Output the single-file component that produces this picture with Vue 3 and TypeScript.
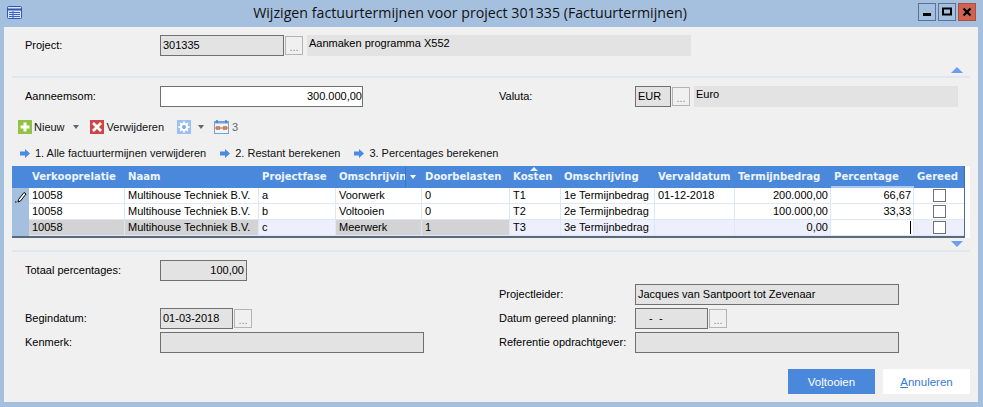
<script setup lang="ts">
interface Row {
  relatie: string
  naam: string
  fase: string
  omschrijving: string
  doorbelasten: string
  kosten: string
  termijn: string
  datum: string
  bedrag: string
  percentage: string
}

const rows: Row[] = [
  { relatie: '10058', naam: 'Multihouse Techniek B.V.', fase: 'a', omschrijving: 'Voorwerk', doorbelasten: '0', kosten: 'T1', termijn: '1e Termijnbedrag', datum: '01-12-2018', bedrag: '200.000,00', percentage: '66,67' },
  { relatie: '10058', naam: 'Multihouse Techniek B.V.', fase: 'b', omschrijving: 'Voltooien', doorbelasten: '0', kosten: 'T2', termijn: '2e Termijnbedrag', datum: '', bedrag: '100.000,00', percentage: '33,33' },
  { relatie: '10058', naam: 'Multihouse Techniek B.V.', fase: 'c', omschrijving: 'Meerwerk', doorbelasten: '1', kosten: 'T3', termijn: '3e Termijnbedrag', datum: '', bedrag: '0,00', percentage: '' }
]

const steps = ['1. Alle factuurtermijnen verwijderen', '2. Restant berekenen', '3. Percentages berekenen']
</script>

<template>
  <div class="window">
    <header class="titlebar">
      <svg class="app-icon" width="15" height="13" viewBox="0 0 15 13">
        <rect x="0.5" y="0.5" width="14" height="12" rx="1" fill="#dbe6f8" stroke="#2f55b5" />
        <path d="M0 3.5H15" stroke="#2f55b5" stroke-width="2" />
        <path d="M2 6.5H13M2 8.5H13M2 10.5H13M6 5V12" stroke="#3a62c4" />
      </svg>
      <div class="title">Wijzigen factuurtermijnen voor project 301335 (Factuurtermijnen)</div>
      <div class="win-buttons">
        <button class="win-btn"><svg width="10" height="10" viewBox="0 0 10 10"><rect x="1" y="6" width="8" height="3" fill="#000" /></svg></button>
        <button class="win-btn"><svg width="10" height="10" viewBox="0 0 10 10"><rect x="1" y="1.5" width="8" height="6" fill="none" stroke="#000" stroke-width="2" /></svg></button>
        <button class="win-btn close"><svg width="10" height="10" viewBox="0 0 10 10"><path d="M1.5 1.5L8.5 8.5M8.5 1.5L1.5 8.5" stroke="#000" stroke-width="2.4" /></svg></button>
      </div>
    </header>

    <main class="panel">
      <section class="top-row">
        <label class="lbl">Project:</label>
        <div class="field ro code">301335</div>
        <button class="dots">...</button>
        <div class="desc project-desc">Aanmaken programma X552</div>
      </section>

      <div class="collapse up"><span class="tri-up"></span></div>
      <div class="divider"></div>

      <section class="two-col amount">
        <div class="cell">
          <label class="lbl">Aanneemsom:</label>
          <div class="field right amount-field">300.000,00</div>
        </div>
        <div class="cell">
          <label class="lbl lbl-r">Valuta:</label>
          <div class="field ro valuta">EUR</div>
          <button class="dots">...</button>
          <div class="desc valuta-desc">Euro</div>
        </div>
      </section>

      <nav class="toolbar">
        <span class="tool">
          <svg width="14" height="14" viewBox="0 0 14 14"><rect width="14" height="14" fill="#8fc245" /><path d="M7 2.5V11.5M2.5 7H11.5" stroke="#fff" stroke-width="3" /></svg>
          Nieuw
        </span>
        <span class="caret nieuw-caret"></span>
        <span class="tool delete">
          <svg width="14" height="14" viewBox="0 0 14 14"><rect width="14" height="14" fill="#cf4446" /><path d="M3 3L11 11M11 3L3 11" stroke="#fff" stroke-width="2.8" /></svg>
          Verwijderen
        </span>
        <span class="tool gear">
          <svg width="14" height="14" viewBox="0 0 14 14">
            <rect width="14" height="14" fill="#9dc0f0" />
            <circle cx="7" cy="7" r="3" fill="#7fa8ea" stroke="#fff" stroke-width="2" />
            <path d="M7 1.5V3.5M7 10.5V12.5M1.5 7H3.5M10.5 7H12.5M3.2 3.2L4.6 4.6M9.4 9.4L10.8 10.8M10.8 3.2L9.4 4.6M4.6 9.4L3.2 10.8" stroke="#fff" stroke-width="1.8" />
          </svg>
        </span>
        <span class="caret gear-caret"></span>
        <span class="tool count">
          <svg width="15" height="14" viewBox="0 0 15 14">
            <rect x="0.5" y="1.5" width="14" height="12" fill="#eef4fb" stroke="#6fa3dc" />
            <path d="M0 2.5H15" stroke="#6fa3dc" stroke-width="2" />
            <path d="M3 0V3M12 0V3" stroke="#3f7fc6" stroke-width="1.5" />
            <path d="M1 8H14" stroke="#8a6a50" />
            <path d="M3 6V10M5 6V10M10 6V10M12 6V10" stroke="#d9743c" stroke-width="1.6" />
          </svg>
          3
        </span>
      </nav>

      <div class="steps">
        <span v-for="step in steps" :key="step" class="step">
          <svg width="10" height="9" viewBox="0 0 10 9"><path d="M0 2.5H5V0L10 4.5L5 9V6.5H0Z" fill="#4a8ae0" /></svg>
          {{ step }}
        </span>
      </div>

      <section class="grid-wrap">
        <div class="grid">
          <div class="grid-row head">
            <div class="marker"></div>
            <div class="c">Verkooprelatie</div>
            <div class="c">Naam</div>
            <div class="c">Projectfase</div>
            <div class="c filter">Omschrijvin<span class="filter-arrow"></span></div>
            <div class="c">Doorbelasten</div>
            <div class="c sorted">Kosten</div>
            <div class="c">Omschrijving</div>
            <div class="c">Vervaldatum</div>
            <div class="c">Termijnbedrag</div>
            <div class="c hover">Percentage</div>
            <div class="c">Gereed</div>
          </div>
          <div v-for="(row, i) in rows" :key="row.kosten" class="grid-row body" :class="{ last: i === 2 }">
            <div class="marker">
              <svg v-if="i === 0" width="12" height="13" viewBox="0 0 12 13">
                <path d="M3.5 9.5L9 2.5L11 4L5.5 11L3 12Z" fill="#fff" stroke="#000" stroke-width="1" />
                <path d="M0 12H1.5" stroke="#000" />
              </svg>
            </div>
            <div class="c sel">{{ row.relatie }}</div>
            <div class="c sel">{{ row.naam }}</div>
            <div class="c">{{ row.fase }}</div>
            <div class="c sel">{{ row.omschrijving }}</div>
            <div class="c sel">{{ row.doorbelasten }}</div>
            <div class="c">{{ row.kosten }}</div>
            <div class="c">{{ row.termijn }}</div>
            <div class="c">{{ row.datum }}</div>
            <div class="c num">{{ row.bedrag }}</div>
            <div class="c num pct">{{ row.percentage }}<span v-if="i === 2" class="cursor"></span></div>
            <div class="c check"><span class="box"></span></div>
          </div>
        </div>
      </section>

      <div class="collapse down"><span class="tri-down"></span></div>
      <div class="divider"></div>

      <section class="two-col details">
        <div class="cell">
          <label class="lbl">Totaal percentages:</label>
          <div class="field ro right totaal">100,00</div>
        </div>
        <div class="cell"></div>
        <div class="cell"></div>
        <div class="cell">
          <label class="lbl lbl-r">Projectleider:</label>
          <div class="field ro wide">Jacques van Santpoort tot Zevenaar</div>
        </div>
        <div class="cell">
          <label class="lbl">Begindatum:</label>
          <div class="field ro date">01-03-2018</div>
          <button class="dots">...</button>
        </div>
        <div class="cell">
          <label class="lbl lbl-r">Datum gereed planning:</label>
          <div class="field ro date empty-date">&nbsp;&nbsp;-&nbsp;&nbsp;-</div>
          <button class="dots">...</button>
        </div>
        <div class="cell">
          <label class="lbl">Kenmerk:</label>
          <div class="field ro wide"></div>
        </div>
        <div class="cell">
          <label class="lbl lbl-r">Referentie opdrachtgever:</label>
          <div class="field ro wide"></div>
        </div>
      </section>

      <footer class="actions">
        <button class="btn primary"><span>Vo<u>l</u>tooien</span></button>
        <button class="btn"><span><u>A</u>nnuleren</span></button>
      </footer>
    </main>
  </div>
</template>

<style>
html,
body {
  margin: 0;
  background: #a5c0de;
}
</style>

<style scoped>
.window {
  width: 983px;
  height: 407px;
  display: flex;
  flex-direction: column;
  background: #a5c0de;
  font-family: "Liberation Sans", Arial, sans-serif;
  font-size: 11px;
  color: #000;
  overflow: hidden;
}

.titlebar {
  height: 27px;
  flex: none;
  display: flex;
  align-items: center;
}

.app-icon {
  margin-left: 7px;
  margin-top: -2px;
  width: 15px;
  flex: none;
}

.title {
  flex: 1;
  text-align: center;
  font-family: "Open Sans", sans-serif;
  font-size: 14.2px;
  color: #111;
  margin-top: -2px;
}

.win-buttons {
  display: flex;
  gap: 2px;
  margin-right: 7px;
  margin-top: -3px;
}

.win-btn {
  width: 18px;
  height: 18px;
  padding: 0;
  display: flex;
  align-items: center;
  justify-content: center;
  background: #a5c0de;
  border: 1px solid #5b7590;
}

.win-btn.close {
  background: #d2624e;
  border-color: #a84f40;
}

.panel {
  flex: none;
  height: 375px;
  margin-left: 4px;
  width: 974px;
  background: #f0f0f0;
  display: flex;
  flex-direction: column;
}

.panel > * {
  flex: none;
}

.top-row {
  display: flex;
  height: 21px;
  margin-top: 8px;
  padding-left: 21px;
}

.lbl {
  width: 135px;
  flex: none;
  line-height: 20px;
  white-space: nowrap;
}

.lbl-r {
  width: 136px;
}

.field {
  box-sizing: border-box;
  height: 21px;
  border: 1px solid #707070;
  background: #fff;
  line-height: 18px;
  padding: 0 2px;
  white-space: nowrap;
  flex: none;
}

.ro {
  background: #e3e3e3;
}

.right {
  text-align: right;
}

.code {
  width: 124px;
}

.dots {
  box-sizing: border-box;
  width: 18px;
  height: 19px;
  margin: 1px 0 0 1px;
  padding: 0;
  border: 1px solid #b4b4b4;
  background: #f0f0f0;
  color: #8a8a8a;
  font: 11px "Liberation Sans", sans-serif;
  line-height: 20px;
  flex: none;
}

.desc {
  box-sizing: border-box;
  height: 21px;
  margin-left: 4px;
  background: #e3e3e3;
  padding: 0 2px;
  line-height: 17px;
  flex: none;
}

.project-desc {
  width: 384px;
}

.valuta-desc {
  width: 264px;
}

.collapse {
  display: flex;
  justify-content: flex-end;
  padding-right: 15px;
  box-sizing: border-box;
  height: 9px;
}

.collapse.up {
  margin-top: 11px;
}

.collapse.down {
  margin-top: 3px;
}

.tri-up,
.tri-down {
  width: 0;
  height: 0;
  border-left: 6px solid transparent;
  border-right: 6px solid transparent;
}

.tri-up {
  border-bottom: 6px solid #6c9df0;
}

.tri-down {
  border-top: 6px solid #6c9df0;
}

.divider {
  height: 2px;
  margin-left: 8px;
  width: 958px;
  background: #dfe7f1;
}

.two-col {
  display: grid;
  grid-template-columns: 474px 1fr;
  padding-left: 21px;
}

.amount {
  margin-top: 8px;
}

.amount .amount-field {
  padding-right: 0;
}

.cell {
  display: flex;
  height: 21px;
}

.amount-field {
  width: 203px;
}

.valuta {
  width: 36px;
}

.toolbar {
  display: flex;
  align-items: center;
  height: 14px;
  margin-top: 13px;
  padding-left: 14px;
}

.tool {
  display: flex;
  align-items: center;
  gap: 2px;
  color: #111;
}

.caret {
  width: 0;
  height: 0;
  border-left: 3.5px solid transparent;
  border-right: 3.5px solid transparent;
  border-top: 4px solid #666;
}

.nieuw-caret {
  margin-left: 8px;
}

.delete {
  margin-left: 11px;
  gap: 3px;
}

.gear {
  margin-left: 13px;
}

.gear-caret {
  margin-left: 7px;
}

.count {
  margin-left: 10px;
  color: #666;
  gap: 3px;
}

.steps {
  display: flex;
  gap: 14px;
  height: 14px;
  margin-top: 12px;
  padding-left: 16px;
  align-items: center;
}

.step {
  display: flex;
  align-items: center;
  gap: 5px;
  color: #111;
}

.grid-wrap {
  margin-top: 6px;
  margin-left: 8px;
  width: 958px;
  height: 72px;
  background: #fff;
}

.grid {
  width: 953px;
  box-sizing: border-box;
  border-right: 1px solid #4d6a8c;
  border-bottom: 2px solid #5a6a7c;
}

.grid-row {
  display: grid;
  grid-template-columns: 17px 96px 134px 77px 86px 88px 51px 94px 80px 96px 83px 1fr;
}

.head {
  height: 22px;
  background: #4a88dc;
  color: #eef4fc;
  font-family: "DejaVu Sans", sans-serif;
  font-weight: bold;
  font-size: 10.1px;
}

.head .c {
  line-height: 21px;
  padding-left: 3px;
  position: relative;
  white-space: nowrap;
  overflow: hidden;
}

.head .marker {
  background: #4a88dc;
}

.filter::after {
  content: "";
  position: absolute;
  left: 69px;
  top: 1px;
  bottom: 1px;
  width: 1px;
  background: #3b74c4;
}

.filter-arrow {
  position: absolute;
  left: 74px;
  top: 9px;
  width: 0;
  height: 0;
  border-left: 3.5px solid transparent;
  border-right: 3.5px solid transparent;
  border-top: 4px solid #fff;
}

.sorted::before {
  content: "";
  position: absolute;
  left: 20px;
  top: 1px;
  width: 0;
  height: 0;
  border-left: 4px solid transparent;
  border-right: 4px solid transparent;
  border-bottom: 4px solid #eef4fc;
}

.hover {
  box-shadow: inset 0 -2px 0 #a9c8f2;
}

.body {
  height: 16px;
}

.body .c {
  box-sizing: border-box;
  height: 16px;
  line-height: 15px;
  padding: 0 2px 0 3px;
  background: #fff;
  border-right: 1px solid #dde8f6;
  border-bottom: 1px solid #dde8f6;
  white-space: nowrap;
}

.marker {
  background: #a5c0de;
  display: flex;
  align-items: center;
  justify-content: center;
}

.last .c {
  background: #eeeffc;
}

.body.last .c.sel {
  background: #d3d3d3;
}

.body.last .c.pct {
  background: #fff;
}

.num {
  text-align: right;
}

.pct {
  position: relative;
}

.cursor {
  position: absolute;
  right: 2px;
  top: 1px;
  width: 1px;
  height: 13px;
  background: #000;
}

.body .check {
  padding: 1px 0 0;
  display: flex;
  justify-content: center;
  border-right: 0;
}

.box {
  box-sizing: border-box;
  width: 13px;
  height: 13px;
  background: #fff;
  border: 1px solid #707070;
}

.details {
  margin-top: 8px;
  row-gap: 3px;
}

.totaal {
  width: 87px;
}

.wide {
  width: 264px;
}

.date {
  width: 73px;
}

.empty-date {
  padding-left: 7px;
}

.actions {
  display: flex;
  gap: 8px;
  justify-content: flex-end;
  margin-top: 16px;
  padding-right: 8px;
}

.btn {
  width: 87px;
  height: 25px;
  padding: 0;
  border: 0;
  background: #fff;
  color: #3a78d4;
  font: 11.5px "Liberation Sans", sans-serif;
}

.btn.primary {
  background: #4a88dc;
  color: #fff;
}
</style>
